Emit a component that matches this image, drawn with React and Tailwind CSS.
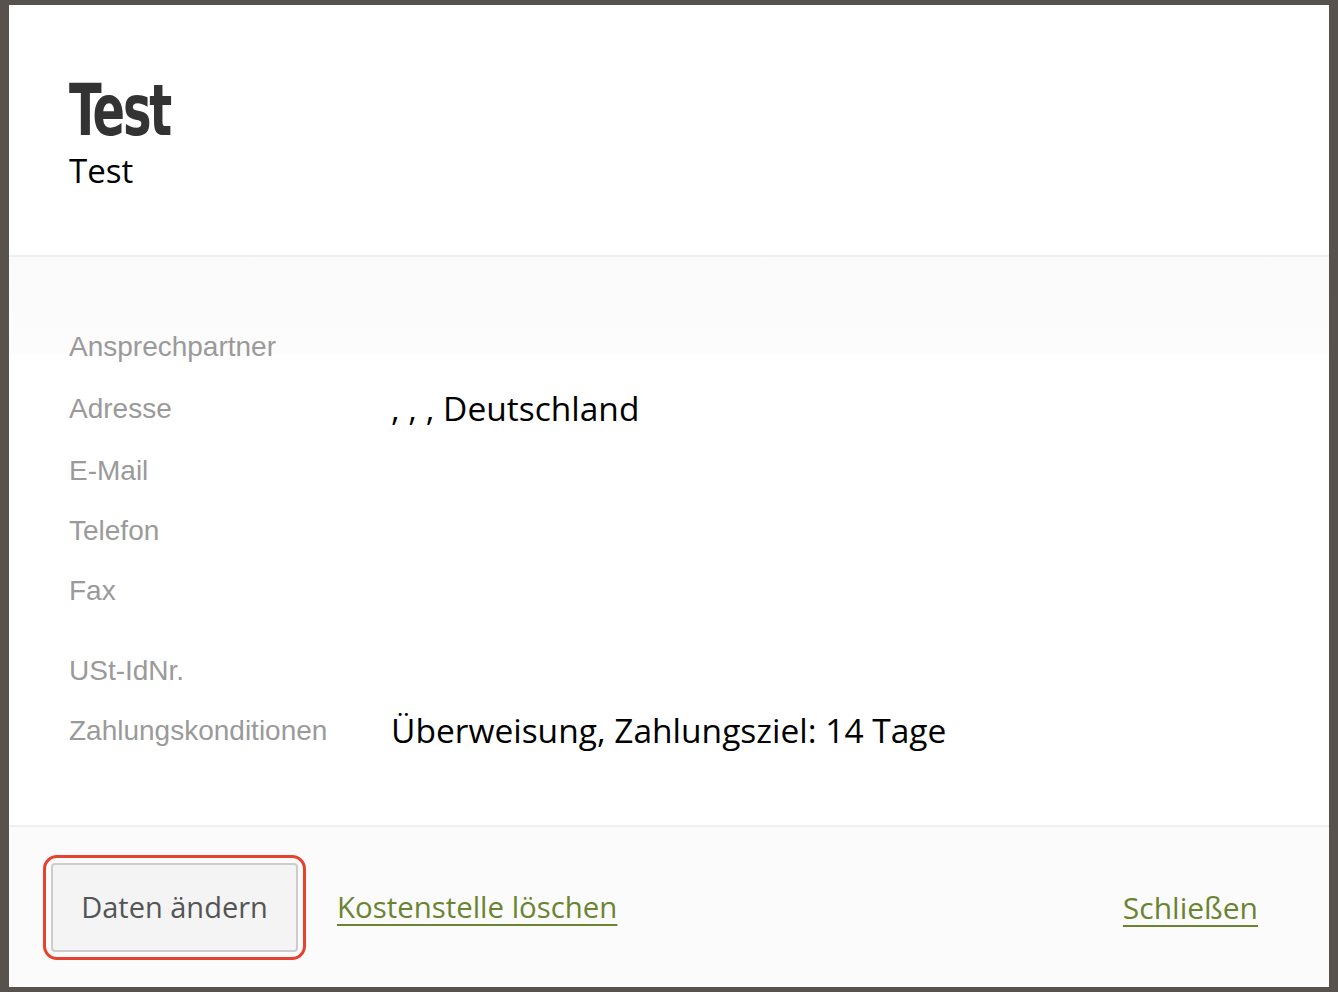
import React from "react";

const rows = [
  { label: "Ansprechpartner", value: "", h: "h-[60px]" },
  { label: "Adresse", value: ", , , Deutschland", h: "h-[64px]" },
  { label: "E-Mail", value: "", h: "h-[60px]" },
  { label: "Telefon", value: "", h: "h-[60px]" },
  { label: "Fax", value: "", h: "h-[60px]" },
];

const billing = [
  { label: "USt-IdNr.", value: "" },
  { label: "Zahlungskonditionen", value: "Überweisung, Zahlungsziel: 14 Tage" },
];

function Row({ label, value, h = "h-[60px]" }) {
  return (
    <div className={`grid grid-cols-[322px_1fr] items-center ${h}`}>
      <span className="font-['Liberation_Sans',Arial,sans-serif] text-[28px] leading-none text-[#9a9a9a]">{label}</span>
      <span className="font-['Open_Sans',sans-serif] text-[33.5px] leading-none text-black">{value}</span>
    </div>
  );
}

export default function App() {
  return (
    <div className="h-[992px] bg-[#57524d] pt-[5px] pb-[5px] pl-[9px] pr-[9px] overflow-hidden">
      <div className="flex h-[982px] flex-col bg-white">
        {/* header */}
        <div className="h-[252px] shrink-0 border-b-2 border-[#f0f0f0] pl-[60px] pt-[69px]">
          <h1 className="origin-left scale-x-[0.74] font-['DejaVu_Sans_Condensed',sans-serif] text-[72px] font-extrabold leading-none tracking-[-0.04em] text-[#333333]">
            Test
          </h1>
          <p className="mt-[8px] font-['Open_Sans',sans-serif] text-[33px] leading-none text-black">Test</p>
        </div>

        {/* body */}
        <div className="flex-1 bg-[linear-gradient(to_bottom,#fafafa_0px,#fcfcfc_97px,#ffffff_98px)] pl-[60px] pt-[60px]">
          {rows.map((r) => (
            <Row key={r.label} {...r} />
          ))}
          <div className="mt-[20px]">
            {billing.map((r) => (
              <Row key={r.label} {...r} />
            ))}
          </div>
        </div>

        {/* footer */}
        <div className="flex h-[162px] shrink-0 items-center border-t-2 border-[#f0f0f0] bg-[#fbfbfb] pl-[34px] pr-[71px] font-['Open_Sans',sans-serif]">
          <div className="rounded-[14px] border-[3px] border-[#e5432f] p-[5px]">
            <button className="block h-[89px] w-[247px] rounded-[4px] border-2 border-[#cccccc] bg-[#f4f4f4] text-[29px] text-[#555555]">
              Daten ändern
            </button>
          </div>
          <a href="#" className="ml-[31px] text-[29.4px] text-[#6b8431] underline decoration-2 underline-offset-[6px]">
            Kostenstelle löschen
          </a>
          <a href="#" className="ml-auto text-[30px] text-[#6b8431] underline decoration-2 underline-offset-[6px]">
            Schließen
          </a>
        </div>
      </div>
    </div>
  );
}
